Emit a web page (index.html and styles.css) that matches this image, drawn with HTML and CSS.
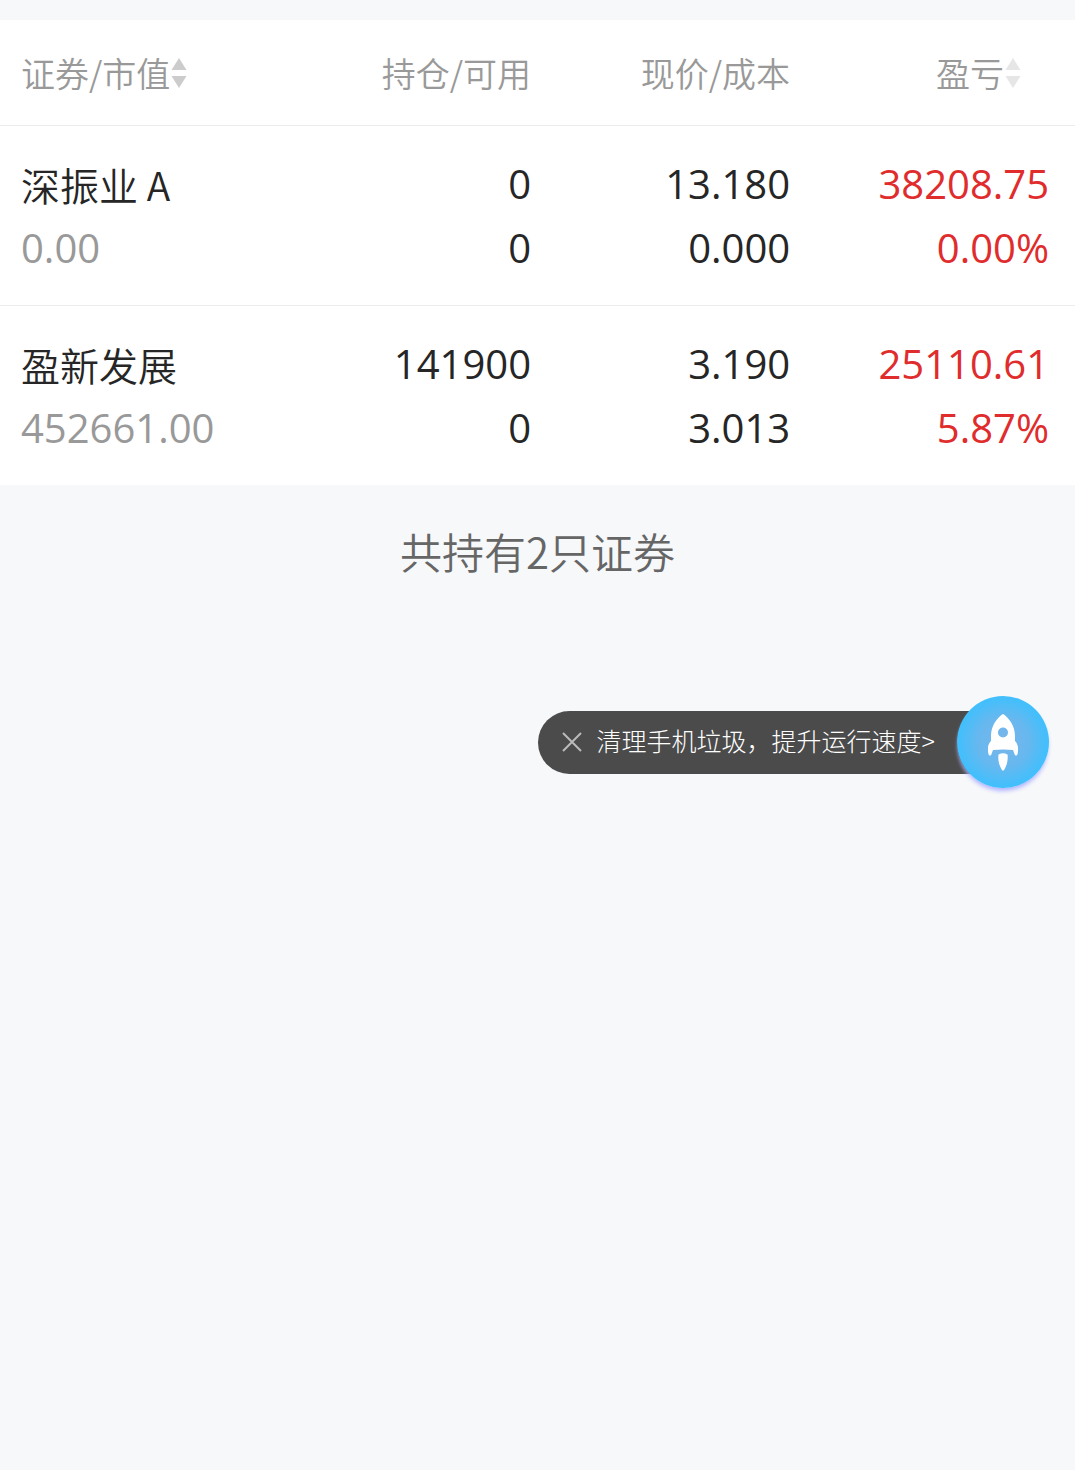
FILE: index.html
```html
<!doctype html>
<html lang="zh-CN">
 <head>
  <meta charset="UTF-8">
  <meta name="viewport" content="width=device-width, initial-scale=1">
  <title>持仓</title>
  <link rel="stylesheet" href="styles.css">
 </head>
 <body>
  <table class="hold">
	<thead>
		<tr>
			<th class="c_name"><button type="button" class="sort">证券/市值<svg class="arrow" viewBox="0 0 16 32"><path d="M8 1L15.500 13H.500zM8 31L15.500 19H.500z"/></svg></button></th>
			<th class="c_num">持仓/可用</th>
			<th class="c_num">现价/成本</th>
			<th class="c_profit"><button type="button" class="sort">盈亏<svg class="arrow light" viewBox="0 0 16 32"><path d="M8 1L15.500 13H.500zM8 31L15.500 19H.500z"/></svg></button></th>
		</tr>
	</thead>
	<tbody>
		<tr>
			<td class="c_name"><p class="name">深振业 A</p><p class="gray">0.00</p></td>
			<td><p>0</p><p>0</p></td>
			<td><p>13.180</p><p>0.000</p></td>
			<td class="c_profit red"><p>38208.75</p><p>0.00%</p></td>
		</tr>
		<tr>
			<td class="c_name"><p class="name">盈新发展</p><p class="gray">452661.00</p></td>
			<td><p>141900</p><p>0</p></td>
			<td><p>3.190</p><p>3.013</p></td>
			<td class="c_profit red"><p>25110.61</p><p>5.87%</p></td>
		</tr>
	</tbody>
  </table>
  <p class="total">共持有2只证券</p>

  <!--右侧悬浮提示-->
  <div class="speed">
	<div class="tip">
		<button type="button" class="close" aria-label="关闭"><svg viewBox="0 0 20 20"><path d="M1 1L19 19M19 1L1 19"/></svg></button>
		<a href="#">清理手机垃圾，提升运行速度&gt;</a>
	</div>
	<button type="button" class="rocket" aria-label="加速">
		<svg viewBox="0 0 30 58">
			<path fill-rule="evenodd" d="M15 0C20 3 27 11 27 22V27C30 30 31 35 29.500 40C29 42 27 42 26.500 40L25 36Q15 35 5 36L3.500 40C3 42 1 42 .500 40C-1 35 0 30 3 27V22C3 11 10 3 15 0zM15 13.500a5 5 0 1 0 0 10a5 5 0 1 0 0-10z"/>
			<path d="M10.500 40.500Q15 38 19.500 40.500C20.500 47 18 53 16 56Q15 57.500 14 56C12 53 9.500 47 10.500 40.500z"/>
		</svg>
	</button>
  </div>
 </body>
</html>
```

FILE: styles.css
```css
*{padding:0;margin:0;box-sizing:border-box;}
body{min-height:100vh;padding-top:20px;background:#f7f8fa;color:#262626;font-family:"Noto Sans CJK SC",sans-serif;font-weight:350;position:relative;}
button{border:0;background:none;font:inherit;color:inherit;cursor:pointer;}
a{color:inherit;text-decoration:none;}
svg{display:block;}

.hold{width:100%;table-layout:fixed;border-collapse:separate;border-spacing:0;background:#fff;}
.hold th{height:106px;border-bottom:1px solid #ececec;font-size:34px;font-weight:350;line-height:48px;color:#999;text-align:right;white-space:nowrap;}
.hold td{padding:26px 0 25px;font-family:"Open Sans","Noto Sans CJK SC",sans-serif;font-size:40px;font-weight:400;line-height:64px;text-align:right;white-space:nowrap;}
.hold td p{height:64px;}
.hold tbody tr:not(:last-child) td{border-bottom:1px solid #ececec;}
.hold .c_name{padding-left:21px;text-align:left;}
.hold .c_num{width:24.1%;}
.hold .c_profit{width:26.5%;padding-right:26px;}
.hold th.c_profit{padding-right:54px;}
.hold .name{font-family:"Noto Sans CJK SC",sans-serif;font-size:39px;font-weight:350;}
.gray{color:#999;}
.red{color:#e02c2c;}
.sort{display:inline-flex;align-items:center;gap:1px;}
.arrow{width:16px;height:32px;fill:#ccc;}
.light{fill:#e6e6e6;}

.total{padding:34px 0;font-size:42px;line-height:64px;color:#666;text-align:center;}

.speed{position:absolute;top:696px;right:26px;display:flex;align-items:center;}
.tip{display:flex;align-items:center;height:63px;margin-right:-46px;padding:0 68px 0 24px;border-radius:32px 0 0 32px;background:#4b4b4b;color:#fff;font-size:25px;font-weight:300;white-space:nowrap;}
.tip a{padding-bottom:4px;}
.close{width:20px;height:20px;margin-right:15px;}
.close svg{width:20px;height:20px;fill:none;stroke:#bbb;stroke-width:2;}
.rocket{position:relative;display:flex;align-items:center;justify-content:center;width:92px;height:92px;padding-top:2px;border-radius:50%;background:radial-gradient(circle,#7ab5ea 0%,#66b8ef 40%,#42bffc 68%);box-shadow:0 4px 4px -1px #b0b4ff;}
.rocket svg{width:30px;height:58px;fill:#fff;}
```
